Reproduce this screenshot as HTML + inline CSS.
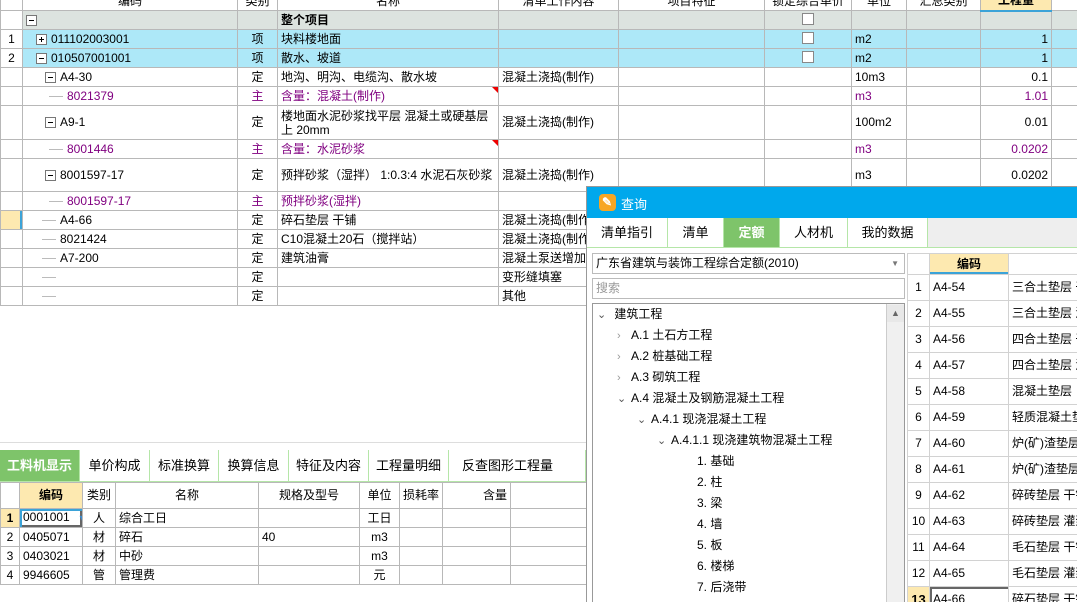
<!DOCTYPE html>
<html><head><meta charset="utf-8"><style>
*{margin:0;padding:0;box-sizing:border-box}
body{width:1077px;height:602px;overflow:hidden;background:#fff;font-family:"Liberation Sans","Noto Sans CJK SC",sans-serif;font-size:12px;color:#000;position:relative}
table{border-collapse:collapse;table-layout:fixed;position:absolute}
td{border:1px solid #b8b8b8;padding:0 3px;white-space:nowrap;overflow:hidden;vertical-align:middle;line-height:13px}
.c{text-align:center}.r{text-align:right}
.blue td{background:#ade8f8}
.gray td{background:#dce3df}
.p{color:#800080}
.box{display:inline-block;width:11px;height:11px;border:1px solid #777;background:#fff;position:relative;vertical-align:-2px;margin-right:4px}
.box:before{content:"";position:absolute;left:2px;top:4px;width:5px;height:1px;background:#000}
.box.plus:after{content:"";position:absolute;left:4px;top:2px;width:1px;height:5px;background:#000}
.chk{display:inline-block;width:12px;height:12px;border:1px solid #888;background:#fff}
.ln{display:inline-block;width:14px;border-top:1px solid #bbb;vertical-align:middle;margin-right:4px}
.abs{position:absolute}
.tab{position:absolute;top:0;height:100%;text-align:center;line-height:32px;font-size:13px;border-right:1px solid #b5e6a8}
.dt{position:absolute;top:0;height:29px;line-height:29px;text-align:center;font-size:13px;border-right:1px solid #b5e6a8}
.tree div{position:absolute;font-size:12px;white-space:nowrap;height:21px;line-height:21px}
.ar{color:#999;font-size:11px;display:inline-block;width:14px}
.rt td{height:26px;border-color:#d2d2d2}
</style></head><body>

<table style="left:0;top:-9px;width:1077px">
<colgroup><col style="width:22px"><col style="width:215px"><col style="width:40px"><col style="width:221px"><col style="width:120px"><col style="width:146px"><col style="width:87px"><col style="width:55px"><col style="width:74px"><col style="width:71px"><col style="width:26px"></colgroup>
<tr style="height:19px"><td></td><td class="c">编码</td><td class="c">类别</td><td class="c">名称</td><td class="c">清单工作内容</td><td class="c">项目特征</td><td class="c">锁定综合单价</td><td class="c">单位</td><td class="c">汇总类别</td><td class="c" style="background:#fde9b0;border-bottom:2px solid #3ba3d8;font-weight:bold">工程量</td><td></td></tr>
<tr class="gray" style="height:19px"><td style="background:#fff"></td><td><span class="box"></span></td><td></td><td style="font-weight:bold">整个项目</td><td></td><td></td><td class="c"><span class="chk"></span></td><td></td><td></td><td></td><td></td></tr>
<tr class="blue" style="height:19px"><td class="c" style="background:#fff">1</td><td style="padding-left:13px"><span class="box plus"></span>011102003001</td><td class="c">项</td><td>块料楼地面</td><td></td><td></td><td class="c"><span class="chk"></span></td><td>m2</td><td></td><td class="r">1</td><td></td></tr>
<tr class="blue" style="height:19px"><td class="c" style="background:#fff">2</td><td style="padding-left:13px"><span class="box"></span>010507001001</td><td class="c">项</td><td>散水、坡道</td><td></td><td></td><td class="c"><span class="chk"></span></td><td>m2</td><td></td><td class="r">1</td><td></td></tr>
<tr style="height:19px"><td></td><td style="padding-left:22px"><span class="box"></span>A4-30</td><td class="c">定</td><td>地沟、明沟、电缆沟、散水坡</td><td>混凝土浇捣(制作)</td><td></td><td></td><td>10m3</td><td></td><td class="r">0.1</td><td></td></tr>
<tr style="height:19px" class="p"><td></td><td style="padding-left:26px"><span class="ln"></span>8021379</td><td class="c">主</td><td style="position:relative">含量：混凝土(制作)<span style="position:absolute;right:0;top:0;border-top:6px solid #e00;border-left:6px solid transparent"></span></td><td></td><td></td><td></td><td>m3</td><td></td><td class="r">1.01</td><td></td></tr>
<tr style="height:34px"><td></td><td style="padding-left:22px"><span class="box"></span>A9-1</td><td class="c">定</td><td style="white-space:normal;line-height:14px">楼地面水泥砂浆找平层 混凝土或硬基层上 20mm</td><td>混凝土浇捣(制作)</td><td></td><td></td><td>100m2</td><td></td><td class="r">0.01</td><td></td></tr>
<tr style="height:19px" class="p"><td></td><td style="padding-left:26px"><span class="ln"></span>8001446</td><td class="c">主</td><td style="position:relative">含量：水泥砂浆<span style="position:absolute;right:0;top:0;border-top:6px solid #e00;border-left:6px solid transparent"></span></td><td></td><td></td><td></td><td>m3</td><td></td><td class="r">0.0202</td><td></td></tr>
<tr style="height:33px"><td></td><td style="padding-left:22px"><span class="box"></span>8001597-17</td><td class="c">定</td><td style="white-space:normal;line-height:14px">预拌砂浆（湿拌） 1:0.3:4 水泥石灰砂浆</td><td>混凝土浇捣(制作)</td><td></td><td></td><td>m3</td><td></td><td class="r">0.0202</td><td></td></tr>
<tr style="height:19px" class="p"><td></td><td style="padding-left:26px"><span class="ln"></span>8001597-17</td><td class="c">主</td><td>预拌砂浆(湿拌)</td><td></td><td></td><td></td><td></td><td></td><td></td><td></td></tr>
<tr style="height:19px"><td style="background:#fde9b0;box-shadow:inset -2px 0 0 #3ba3d8"></td><td style="padding-left:19px"><span class="ln"></span>A4-66</td><td class="c">定</td><td>碎石垫层 干铺</td><td>混凝土浇捣(制作)</td><td></td><td></td><td></td><td></td><td></td><td></td></tr>
<tr style="height:19px"><td></td><td style="padding-left:19px"><span class="ln"></span>8021424</td><td class="c">定</td><td>C10混凝土20石（搅拌站）</td><td>混凝土浇捣(制作)</td><td></td><td></td><td></td><td></td><td></td><td></td></tr>
<tr style="height:19px"><td></td><td style="padding-left:19px"><span class="ln"></span>A7-200</td><td class="c">定</td><td>建筑油膏</td><td>混凝土泵送增加费</td><td></td><td></td><td></td><td></td><td></td><td></td></tr>
<tr style="height:19px"><td></td><td style="padding-left:19px"><span class="ln"></span></td><td class="c">定</td><td></td><td>变形缝填塞</td><td></td><td></td><td></td><td></td><td></td><td></td></tr>
<tr style="height:19px"><td></td><td style="padding-left:19px"><span class="ln"></span></td><td class="c">定</td><td></td><td>其他</td><td></td><td></td><td></td><td></td><td></td><td></td></tr>
</table>

<div class="abs" style="left:0;top:442px;width:586px;height:1px;background:#ddd"></div>
<div class="abs" style="left:0;top:450px;width:586px;height:32px;border-bottom:1px solid #b5e6a8">
<div class="tab" style="left:0;width:80px;background:#7ec46a;color:#fff;font-weight:bold">工料机显示</div>
<div class="tab" style="left:80px;width:70px">单价构成</div>
<div class="tab" style="left:150px;width:69px">标准换算</div>
<div class="tab" style="left:219px;width:70px">换算信息</div>
<div class="tab" style="left:289px;width:80px">特征及内容</div>
<div class="tab" style="left:369px;width:80px">工程量明细</div>
<div class="tab" style="left:449px;width:137px;text-align:left;padding-left:13px">反查图形工程量</div>
</div>
<table style="left:0;top:482px;width:600px">
<colgroup><col style="width:19px"><col style="width:63px"><col style="width:33px"><col style="width:143px"><col style="width:101px"><col style="width:40px"><col style="width:43px"><col style="width:68px"><col style="width:90px"></colgroup>
<tr style="height:26px"><td></td><td class="c" style="background:#fde9b0;font-weight:bold">编码</td><td class="c">类别</td><td class="c">名称</td><td class="c">规格及型号</td><td class="c">单位</td><td class="c">损耗率</td><td class="r">含量</td><td></td></tr>
<tr style="height:19px"><td class="c" style="background:#fde9b0;font-weight:bold">1</td><td style="box-shadow:inset 2px 2px 0 #3ba3d8,inset -2px -2px 0 #666">0001001<span style="color:#3a8bd0;font-size:9px;position:relative;left:8px">▼</span></td><td class="c">人</td><td>综合工日</td><td></td><td class="c">工日</td><td></td><td></td><td></td></tr>
<tr style="height:19px"><td class="c">2</td><td>0405071</td><td class="c">材</td><td>碎石</td><td>40</td><td class="c">m3</td><td></td><td></td><td></td></tr>
<tr style="height:19px"><td class="c">3</td><td>0403021</td><td class="c">材</td><td>中砂</td><td></td><td class="c">m3</td><td></td><td></td><td></td></tr>
<tr style="height:19px"><td class="c">4</td><td>9946605</td><td class="c">管</td><td>管理费</td><td></td><td class="c">元</td><td></td><td></td><td></td></tr>
</table>

<!-- dialog -->
<div class="abs" style="left:586px;top:186px;width:491px;height:416px;background:#fff;border-left:1px solid #999;border-top:1px solid #999;overflow:hidden">
<div class="abs" style="left:0;top:0;width:491px;height:31px;background:#00a8ec">
<div class="abs" style="left:12px;top:7px;width:17px;height:17px;border-radius:4px;background:#f7a623"><span style="position:absolute;left:3px;top:1px;color:#fff;font-size:12px;font-weight:bold">✎</span></div>
<div class="abs" style="left:34px;top:7px;color:#fff;font-size:13px">查询</div>
</div>
<div class="abs" style="left:0;top:31px;width:491px;height:30px;background:#eee;border-bottom:1px solid #b5e6a8">
<div class="dt" style="left:0;width:81px;background:#fff">清单指引</div>
<div class="dt" style="left:81px;width:56px;background:#fff">清单</div>
<div class="dt" style="left:137px;width:56px;background:#7ec46a;color:#fff;font-weight:bold">定额</div>
<div class="dt" style="left:193px;width:68px;background:#fff">人材机</div>
<div class="dt" style="left:261px;width:80px;background:#fff">我的数据</div>
</div>
<div class="abs" style="left:5px;top:66px;width:313px;height:21px;border:1px solid #bbb;line-height:19px;padding-left:3px;font-size:12px">广东省建筑与装饰工程综合定额(2010)<span style="position:absolute;right:5px;top:0;color:#777;font-size:8px">▼</span></div>
<div class="abs" style="left:5px;top:91px;width:313px;height:21px;border:1px solid #bbb;line-height:19px;padding-left:3px;color:#999">搜索</div>
<div class="abs tree" style="left:5px;top:116px;width:313px;height:300px;border:1px solid #999;overflow:hidden">
<div style="left:4px;top:0"><span class="ar" style="color:#555">⌄</span>&nbsp;建筑工程</div>
<div style="left:24px;top:21px"><span class="ar">›</span>A.1 土石方工程</div>
<div style="left:24px;top:42px"><span class="ar">›</span>A.2 桩基础工程</div>
<div style="left:24px;top:63px"><span class="ar">›</span>A.3 砌筑工程</div>
<div style="left:24px;top:84px"><span class="ar" style="color:#555">⌄</span>A.4 混凝土及钢筋混凝土工程</div>
<div style="left:44px;top:105px"><span class="ar" style="color:#555">⌄</span>A.4.1 现浇混凝土工程</div>
<div style="left:64px;top:126px"><span class="ar" style="color:#555">⌄</span>A.4.1.1 现浇建筑物混凝土工程</div>
<div style="left:104px;top:147px">1. 基础</div>
<div style="left:104px;top:168px">2. 柱</div>
<div style="left:104px;top:189px">3. 梁</div>
<div style="left:104px;top:210px">4. 墙</div>
<div style="left:104px;top:231px">5. 板</div>
<div style="left:104px;top:252px">6. 楼梯</div>
<div style="left:104px;top:273px">7. 后浇带</div>
<div style="left:293px;top:0;width:19px;height:300px;background:#f0f0f0;border-left:1px solid #ccc"></div>
<div style="left:294px;top:1px;width:17px;height:17px;background:#e8e8e8;color:#666;font-size:9px;text-align:center;line-height:17px">▲</div>
</div>
<table class="rt" style="left:320px;top:66px;width:180px">
<colgroup><col style="width:22px"><col style="width:79px"><col style="width:79px"></colgroup>
<tr style="height:21px"><td style="height:21px"></td><td class="c" style="height:21px;background:#fde9b0;font-weight:bold;box-shadow:inset 0 -2px 0 #3ba3d8">编码</td><td style="height:21px"></td></tr>
<tr><td class="c">1</td><td>A4-54</td><td>三合土垫层 干铺</td></tr>
<tr><td class="c">2</td><td>A4-55</td><td>三合土垫层 灌浆</td></tr>
<tr><td class="c">3</td><td>A4-56</td><td>四合土垫层 干铺</td></tr>
<tr><td class="c">4</td><td>A4-57</td><td>四合土垫层 灌浆</td></tr>
<tr><td class="c">5</td><td>A4-58</td><td>混凝土垫层</td></tr>
<tr><td class="c">6</td><td>A4-59</td><td>轻质混凝土垫层</td></tr>
<tr><td class="c">7</td><td>A4-60</td><td>炉(矿)渣垫层 干铺</td></tr>
<tr><td class="c">8</td><td>A4-61</td><td>炉(矿)渣垫层 拌</td></tr>
<tr><td class="c">9</td><td>A4-62</td><td>碎砖垫层 干铺</td></tr>
<tr><td class="c">10</td><td>A4-63</td><td>碎砖垫层 灌浆</td></tr>
<tr><td class="c">11</td><td>A4-64</td><td>毛石垫层 干铺</td></tr>
<tr><td class="c">12</td><td>A4-65</td><td>毛石垫层 灌浆</td></tr>
<tr><td class="c" style="background:#fde9b0;font-weight:bold;font-size:13px">13</td><td style="box-shadow:inset 2px 2px 0 #666">A4-66</td><td>碎石垫层 干铺</td></tr>
</table>
</div>
</body></html>
